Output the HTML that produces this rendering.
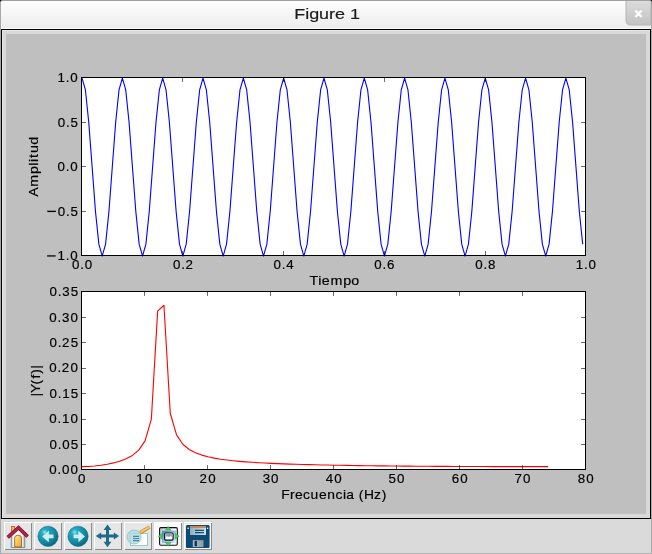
<!DOCTYPE html>
<html><head><meta charset="utf-8"><title>Figure 1</title>
<style>html,body{margin:0;padding:0;width:652px;height:554px;overflow:hidden;background:#dadada;font-family:"Liberation Sans",sans-serif}</style>
</head><body>
<svg width="652" height="554" viewBox="0 0 652 554" style="position:absolute;left:0;top:0;will-change:transform">
<defs>
<linearGradient id="tb" x1="0" y1="0" x2="0" y2="1"><stop offset="0" stop-color="#ffffff"/><stop offset="1" stop-color="#ececec"/></linearGradient>
<linearGradient id="cb" x1="0" y1="0" x2="0" y2="1"><stop offset="0" stop-color="#dcdcdc"/><stop offset="1" stop-color="#c2c2c2"/></linearGradient>
</defs>
<rect x="0" y="0" width="652" height="554" fill="#dadada"/>
<rect x="0" y="0" width="652" height="29" fill="url(#tb)"/>
<rect x="1" y="28" width="650" height="1" fill="#fafafa"/>
<path d="M626,0 H651 V25 H630.5 Q626,25 626,20.5 Z" fill="url(#cb)" stroke="#b5b5b5" stroke-width="1"/>
<path d="M635.3,10.7 L641.7,17.1 M641.7,10.7 L635.3,17.1" stroke="#8a8a8a" stroke-opacity="0.35" stroke-width="2.6" transform="translate(0,0.6)"/>
<path d="M635.3,10.7 L641.7,17.1 M641.7,10.7 L635.3,17.1" stroke="#fff" stroke-width="2.5"/>
<g transform="translate(327.1,19) scale(1.165,1)"><text x="0" y="0" text-anchor="middle" font-size="15.4" fill="#1c1c1c" stroke="#1c1c1c" stroke-width="0.2" font-family="Liberation Sans, sans-serif">Figure 1</text></g>
<rect x="0" y="0" width="1" height="554" fill="#a8a8a8"/>
<rect x="651" y="0" width="1" height="554" fill="#a8a8a8"/>
<rect x="0" y="0" width="652" height="1" fill="#a0a0a0"/>
<rect x="0" y="553" width="652" height="1" fill="#b0b0b0"/>
<rect x="0" y="0" width="1" height="1" fill="#111"/><rect x="1" y="0" width="1" height="1" fill="#777"/><rect x="0" y="1" width="1" height="1" fill="#777"/><rect x="1" y="1" width="1" height="1" fill="#d0d0d0"/>
<rect x="651" y="0" width="1" height="1" fill="#111"/><rect x="650" y="0" width="1" height="1" fill="#777"/><rect x="651" y="1" width="1" height="1" fill="#777"/>
<rect x="1" y="29" width="650" height="490" fill="#000"/>
<rect x="2" y="30" width="648" height="488" fill="#e6e6e6"/>
<rect x="3" y="31" width="647" height="487" fill="#d9d9d9"/>
<rect x="6" y="34" width="640" height="480" fill="#bfbfbf"/>
<rect x="81.5" y="77.5" width="504.0" height="178.0" fill="#fff"/>
<polyline points="82.05,78.05 85.41,89.97 88.77,122.55 92.13,167.05 95.49,211.55 98.85,244.13 102.21,256.05 105.57,244.13 108.93,211.55 112.29,167.05 115.65,122.55 119.01,89.97 122.37,78.05 125.73,89.97 129.09,122.55 132.45,167.05 135.81,211.55 139.17,244.13 142.53,256.05 145.89,244.13 149.25,211.55 152.61,167.05 155.97,122.55 159.33,89.97 162.69,78.05 166.05,89.97 169.41,122.55 172.77,167.05 176.13,211.55 179.49,244.13 182.85,256.05 186.21,244.13 189.57,211.55 192.93,167.05 196.29,122.55 199.65,89.97 203.01,78.05 206.37,89.97 209.73,122.55 213.09,167.05 216.45,211.55 219.81,244.13 223.17,256.05 226.53,244.13 229.89,211.55 233.25,167.05 236.61,122.55 239.97,89.97 243.33,78.05 246.69,89.97 250.05,122.55 253.41,167.05 256.77,211.55 260.13,244.13 263.49,256.05 266.85,244.13 270.21,211.55 273.57,167.05 276.93,122.55 280.29,89.97 283.65,78.05 287.01,89.97 290.37,122.55 293.73,167.05 297.09,211.55 300.45,244.13 303.81,256.05 307.17,244.13 310.53,211.55 313.89,167.05 317.25,122.55 320.61,89.97 323.97,78.05 327.33,89.97 330.69,122.55 334.05,167.05 337.41,211.55 340.77,244.13 344.13,256.05 347.49,244.13 350.85,211.55 354.21,167.05 357.57,122.55 360.93,89.97 364.29,78.05 367.65,89.97 371.01,122.55 374.37,167.05 377.73,211.55 381.09,244.13 384.45,256.05 387.81,244.13 391.17,211.55 394.53,167.05 397.89,122.55 401.25,89.97 404.61,78.05 407.97,89.97 411.33,122.55 414.69,167.05 418.05,211.55 421.41,244.13 424.77,256.05 428.13,244.13 431.49,211.55 434.85,167.05 438.21,122.55 441.57,89.97 444.93,78.05 448.29,89.97 451.65,122.55 455.01,167.05 458.37,211.55 461.73,244.13 465.09,256.05 468.45,244.13 471.81,211.55 475.17,167.05 478.53,122.55 481.89,89.97 485.25,78.05 488.61,89.97 491.97,122.55 495.33,167.05 498.69,211.55 502.05,244.13 505.41,256.05 508.77,244.13 512.13,211.55 515.49,167.05 518.85,122.55 522.21,89.97 525.57,78.05 528.93,89.97 532.29,122.55 535.65,167.05 539.01,211.55 542.37,244.13 545.73,256.05 549.09,244.13 552.45,211.55 555.81,167.05 559.17,122.55 562.53,89.97 565.89,78.05 569.25,89.97 572.61,122.55 575.97,167.05 579.33,211.55 582.69,244.13" fill="none" stroke="#0000ff" stroke-width="1.11" stroke-linejoin="round"/>
<path d="M81.5,255.5v-4.4M81.5,77.5v4.4M182.5,255.5v-4.4M182.5,77.5v4.4M283.5,255.5v-4.4M283.5,77.5v4.4M384.5,255.5v-4.4M384.5,77.5v4.4M485.5,255.5v-4.4M485.5,77.5v4.4M585.5,255.5v-4.4M585.5,77.5v4.4M81.5,255.5h4.4M585.5,255.5h-4.4M81.5,211.5h4.4M585.5,211.5h-4.4M81.5,166.5h4.4M585.5,166.5h-4.4M81.5,122.5h4.4M585.5,122.5h-4.4M81.5,77.5h4.4M585.5,77.5h-4.4" stroke="#000" stroke-width="0.6" fill="none"/>
<rect x="81.5" y="77.5" width="504.0" height="178.0" fill="none" stroke="#000" stroke-width="1"/>
<rect x="81.5" y="291.5" width="504.0" height="178.0" fill="#fff"/>
<polyline points="82.05,466.66 88.35,466.50 94.65,466.02 100.95,465.27 107.25,464.24 113.55,462.91 119.85,461.16 126.15,458.79 132.45,455.42 138.75,450.18 145.05,440.83 151.35,419.16 157.65,311.14 163.95,305.27 170.25,413.27 176.55,434.93 182.85,444.25 189.15,449.45 195.45,452.78 201.75,455.10 208.05,456.81 214.35,458.13 220.65,459.18 226.95,460.03 233.25,460.74 239.55,461.34 245.85,461.86 252.15,462.30 258.45,462.69 264.75,463.03 271.05,463.34 277.35,463.62 283.65,463.86 289.95,464.09 296.25,464.29 302.55,464.47 308.85,464.64 315.15,464.80 321.45,464.94 327.75,465.07 334.05,465.20 340.35,465.31 346.65,465.41 352.95,465.51 359.25,465.60 365.55,465.69 371.85,465.77 378.15,465.84 384.45,465.91 390.75,465.98 397.05,466.04 403.35,466.09 409.65,466.14 415.95,466.19 422.25,466.24 428.55,466.28 434.85,466.32 441.15,466.36 447.45,466.40 453.75,466.43 460.05,466.46 466.35,466.48 472.65,466.51 478.95,466.53 485.25,466.55 491.55,466.57 497.85,466.59 504.15,466.60 510.45,466.62 516.75,466.63 523.05,466.64 529.35,466.65 535.65,466.65 541.95,466.66 548.25,466.66" fill="none" stroke="#ff0000" stroke-width="1.11" stroke-linejoin="round"/>
<path d="M81.5,469.5v-4.4M81.5,291.5v4.4M144.5,469.5v-4.4M144.5,291.5v4.4M207.5,469.5v-4.4M207.5,291.5v4.4M270.5,469.5v-4.4M270.5,291.5v4.4M333.5,469.5v-4.4M333.5,291.5v4.4M396.5,469.5v-4.4M396.5,291.5v4.4M459.5,469.5v-4.4M459.5,291.5v4.4M522.5,469.5v-4.4M522.5,291.5v4.4M585.5,469.5v-4.4M585.5,291.5v4.4M81.5,469.5h4.4M585.5,469.5h-4.4M81.5,444.5h4.4M585.5,444.5h-4.4M81.5,419.5h4.4M585.5,419.5h-4.4M81.5,393.5h4.4M585.5,393.5h-4.4M81.5,368.5h4.4M585.5,368.5h-4.4M81.5,342.5h4.4M585.5,342.5h-4.4M81.5,317.5h4.4M585.5,317.5h-4.4M81.5,291.5h4.4M585.5,291.5h-4.4" stroke="#000" stroke-width="0.6" fill="none"/>
<rect x="81.5" y="291.5" width="504.0" height="178.0" fill="none" stroke="#000" stroke-width="1"/>
<g font-family="Liberation Sans, sans-serif" fill="#000" stroke="#000" stroke-width="0.18">
<rect x="47.22" y="255.37" width="8.35" height="1.11"/><text transform="translate(0,260.10) scale(1.000,1)" x="57.45 65.72 70.23" y="0" font-size="13.333">1.0</text>
<rect x="47.50" y="210.87" width="8.35" height="1.11"/><text transform="translate(0,215.60) scale(1.000,1)" x="57.79 66.00 70.46" y="0" font-size="13.333">0.5</text>
<text transform="translate(0,171.10) scale(1.000,1)" x="57.51 65.72 70.23" y="0" font-size="13.333">0.0</text>
<text transform="translate(0,126.60) scale(1.000,1)" x="57.79 66.00 70.46" y="0" font-size="13.333">0.5</text>
<text transform="translate(0,82.10) scale(1.000,1)" x="57.45 65.72 70.23" y="0" font-size="13.333">1.0</text>
<text transform="translate(0,269.00) scale(1.000,1)" x="71.98 80.19 84.70" y="0" font-size="13.333">0.0</text>
<text transform="translate(0,269.00) scale(1.000,1)" x="173.01 181.22 185.55" y="0" font-size="13.333">0.2</text>
<text transform="translate(0,269.00) scale(1.000,1)" x="273.51 281.73 286.23" y="0" font-size="13.333">0.4</text>
<text transform="translate(0,269.00) scale(1.000,1)" x="374.36 382.57 387.08" y="0" font-size="13.333">0.6</text>
<text transform="translate(0,269.00) scale(1.000,1)" x="475.19 483.41 487.92" y="0" font-size="13.333">0.8</text>
<text transform="translate(0,269.00) scale(1.000,1)" x="575.63 583.90 588.41" y="0" font-size="13.333">1.0</text>
<text transform="translate(0,285.00) scale(1.070,1)" x="289.23 297.36 300.71 308.78 320.69 328.38" y="0" font-size="13.333">Tiempo</text>
<text transform="translate(38.30,0) rotate(-90) scale(1.070,1)" x="-183.84 -174.58 -162.67 -154.83 -151.36 -147.60 -143.06 -135.20" y="0" font-size="13.333">Amplitud</text>
<text transform="translate(0,474.10) scale(1.000,1)" x="49.23 57.44 61.95 70.43" y="0" font-size="13.333">0.00</text>
<text transform="translate(0,448.67) scale(1.000,1)" x="49.51 57.72 62.23 70.66" y="0" font-size="13.333">0.05</text>
<text transform="translate(0,423.24) scale(1.000,1)" x="49.23 57.44 61.89 70.43" y="0" font-size="13.333">0.10</text>
<text transform="translate(0,397.81) scale(1.000,1)" x="49.51 57.72 62.17 70.66" y="0" font-size="13.333">0.15</text>
<text transform="translate(0,372.39) scale(1.000,1)" x="49.23 57.44 61.77 70.43" y="0" font-size="13.333">0.20</text>
<text transform="translate(0,346.96) scale(1.000,1)" x="49.51 57.72 62.05 70.66" y="0" font-size="13.333">0.25</text>
<text transform="translate(0,321.53) scale(1.000,1)" x="49.23 57.44 61.97 70.43" y="0" font-size="13.333">0.30</text>
<text transform="translate(0,296.10) scale(1.000,1)" x="49.51 57.72 62.25 70.66" y="0" font-size="13.333">0.35</text>
<text transform="translate(0,483.00) scale(1.000,1)" x="77.94" y="0" font-size="13.333">0</text>
<text transform="translate(0,483.00) scale(1.000,1)" x="136.35 144.89" y="0" font-size="13.333">10</text>
<text transform="translate(0,483.00) scale(1.000,1)" x="199.48 208.14" y="0" font-size="13.333">20</text>
<text transform="translate(0,483.00) scale(1.000,1)" x="262.65 271.12" y="0" font-size="13.333">30</text>
<text transform="translate(0,483.00) scale(1.000,1)" x="325.81 334.30" y="0" font-size="13.333">40</text>
<text transform="translate(0,483.00) scale(1.000,1)" x="388.57 397.11" y="0" font-size="13.333">50</text>
<text transform="translate(0,483.00) scale(1.000,1)" x="451.68 460.16" y="0" font-size="13.333">60</text>
<text transform="translate(0,483.00) scale(1.000,1)" x="514.57 523.08" y="0" font-size="13.333">70</text>
<text transform="translate(0,483.00) scale(1.000,1)" x="577.69 586.17" y="0" font-size="13.333">80</text>
<text transform="translate(0,498.60) scale(1.040,1)" x="270.35 278.80 283.67 291.33 298.67 306.73 314.74 322.52 329.83 332.83 341.13 344.96 350.02 359.75 367.01" y="0" font-size="13.333">Frecuencia (Hz)</text>
<text transform="translate(40.30,0) rotate(-90) scale(1.040,1)" x="-381.32 -377.95 -369.65 -364.02 -359.46 -354.65" y="0" font-size="13.333">|Y(f)|</text>
</g>
<rect x="4" y="522" width="28" height="28" fill="#e6e6e6"/>
<rect x="4" y="522" width="28" height="1" fill="#ffffff"/>
<rect x="4" y="522" width="1" height="28" fill="#ffffff"/>
<rect x="31" y="523" width="1" height="27" fill="#8a8a8a"/>
<rect x="5" y="549" width="27" height="1" fill="#8a8a8a"/>
<rect x="34" y="522" width="28" height="28" fill="#e6e6e6"/>
<rect x="34" y="522" width="28" height="1" fill="#ffffff"/>
<rect x="34" y="522" width="1" height="28" fill="#ffffff"/>
<rect x="61" y="523" width="1" height="27" fill="#8a8a8a"/>
<rect x="35" y="549" width="27" height="1" fill="#8a8a8a"/>
<rect x="64" y="522" width="28" height="28" fill="#e6e6e6"/>
<rect x="64" y="522" width="28" height="1" fill="#ffffff"/>
<rect x="64" y="522" width="1" height="28" fill="#ffffff"/>
<rect x="91" y="523" width="1" height="27" fill="#8a8a8a"/>
<rect x="65" y="549" width="27" height="1" fill="#8a8a8a"/>
<rect x="94" y="522" width="28" height="28" fill="#e6e6e6"/>
<rect x="94" y="522" width="28" height="1" fill="#ffffff"/>
<rect x="94" y="522" width="1" height="28" fill="#ffffff"/>
<rect x="121" y="523" width="1" height="27" fill="#8a8a8a"/>
<rect x="95" y="549" width="27" height="1" fill="#8a8a8a"/>
<rect x="124" y="522" width="28" height="28" fill="#e6e6e6"/>
<rect x="124" y="522" width="28" height="1" fill="#ffffff"/>
<rect x="124" y="522" width="1" height="28" fill="#ffffff"/>
<rect x="151" y="523" width="1" height="27" fill="#8a8a8a"/>
<rect x="125" y="549" width="27" height="1" fill="#8a8a8a"/>
<rect x="154" y="522" width="28" height="28" fill="#e6e6e6"/>
<rect x="154" y="522" width="28" height="1" fill="#ffffff"/>
<rect x="154" y="522" width="1" height="28" fill="#ffffff"/>
<rect x="181" y="523" width="1" height="27" fill="#8a8a8a"/>
<rect x="155" y="549" width="27" height="1" fill="#8a8a8a"/>
<rect x="184" y="522" width="28" height="28" fill="#e6e6e6"/>
<rect x="184" y="522" width="28" height="1" fill="#ffffff"/>
<rect x="184" y="522" width="1" height="28" fill="#ffffff"/>
<rect x="211" y="523" width="1" height="27" fill="#8a8a8a"/>
<rect x="185" y="549" width="27" height="1" fill="#8a8a8a"/>
<defs>
<radialGradient id="ball" cx="0.33" cy="0.3" r="0.8"><stop offset="0" stop-color="#78f4ff"/><stop offset="0.18" stop-color="#2aa9c0"/><stop offset="0.6" stop-color="#148aa4"/><stop offset="1" stop-color="#0a6179"/></radialGradient>
<linearGradient id="door" x1="0" y1="0" x2="1" y2="1"><stop offset="0" stop-color="#fff0b0"/><stop offset="0.5" stop-color="#f7c54e"/><stop offset="1" stop-color="#e9a52a"/></linearGradient>
<linearGradient id="wall" x1="0" y1="0" x2="1" y2="0"><stop offset="0" stop-color="#b8c8c8"/><stop offset="0.2" stop-color="#ffffff"/><stop offset="0.8" stop-color="#f4f4f4"/><stop offset="1" stop-color="#a8b8b8"/></linearGradient>
<linearGradient id="lbl" x1="0" y1="0" x2="1" y2="0"><stop offset="0" stop-color="#8fb0c2"/><stop offset="1" stop-color="#cfe0e8"/></linearGradient>
<linearGradient id="shut" x1="0" y1="0" x2="1" y2="0"><stop offset="0" stop-color="#b0bec6"/><stop offset="1" stop-color="#8a9ca6"/></linearGradient>
<linearGradient id="scr" x1="0" y1="0" x2="1" y2="1"><stop offset="0" stop-color="#3f86d0"/><stop offset="0.6" stop-color="#9cc8f0"/><stop offset="1" stop-color="#e4f2ff"/></linearGradient>
<linearGradient id="frm" x1="0" y1="0" x2="1" y2="1"><stop offset="0" stop-color="#c4c4c4"/><stop offset="0.5" stop-color="#f4f4f4"/><stop offset="1" stop-color="#ffffff"/></linearGradient>
</defs>
<!-- home -->
<g>
<path d="M11.3,547.6 V533.5 L18.5,527 L24.8,533 V547.6 Z" fill="url(#wall)" stroke="#6f9396" stroke-width="1"/>
<rect x="11.3" y="547" width="13.5" height="0.9" fill="#6f9ea3"/>
<path d="M14.6,547 V538.2 Q14.6,535.4 17.2,535.4 H18.9 Q21.5,535.4 21.5,538.2 V547 Z" fill="url(#door)" stroke="#a4542c" stroke-width="0.85"/>
<rect x="11.5" y="526.4" width="3.2" height="5" fill="#f4c04a" stroke="#9a4c34" stroke-width="0.7"/>
<path d="M7.75,537.35 L18.5,527.6 L27.6,536.5" fill="none" stroke="#7c0c2a" stroke-width="3.6" stroke-linejoin="miter"/>
<path d="M7.75,537.35 L18.5,527.6 L27.6,536.5" fill="none" stroke="#b4234a" stroke-width="2.1" stroke-linejoin="miter"/>
</g>
<!-- back -->
<g>
<circle cx="48.05" cy="536.3" r="10.15" fill="url(#ball)" stroke="#0d6078" stroke-width="0.5"/>
<path d="M42.1,536.4 L48.8,530.8 V534.6 H53.5 V538.2 H48.8 V542.2 Z" fill="#cdeff2"/>
</g>
<!-- forward -->
<g>
<circle cx="78.05" cy="536.3" r="10.15" fill="url(#ball)" stroke="#0d6078" stroke-width="0.5"/>
<path d="M85,536.4 L78.4,530.8 V534.6 H73.6 V538.2 H78.4 V542.2 Z" fill="#cdeff2"/>
</g>
<!-- move -->
<g fill="#1f6a88">
<rect x="106" y="529" width="3" height="13.5"/>
<rect x="100.5" y="534.5" width="14" height="3"/>
<path d="M107.5,524.6 L103.6,530 H111.4 Z"/>
<path d="M107.5,547.2 L103.6,541.8 H111.4 Z"/>
<path d="M95.8,536 L101.2,532.4 V539.6 Z"/>
<path d="M119.2,536 L113.8,532.4 V539.6 Z"/>
</g>
<!-- zoom -->
<g>
<rect x="130.5" y="533.5" width="17" height="12" fill="#ffffff" stroke="#8ccfd8" stroke-width="1"/>
<circle cx="134.1" cy="537" r="7.0" fill="#b0d8de" fill-opacity="0.8" stroke="#8fc6ce" stroke-width="0.9"/>
<path d="M133,536.4 H139.2 M133,538.5 H139.2 M133,540.6 H139.2" stroke="#3f88a0" stroke-width="1.15"/>
<path d="M140.2,532.6 L149.6,527" stroke="#c98030" stroke-width="3.6" stroke-linecap="butt"/>
<path d="M140.4,532.3 L149.4,527" stroke="#f6c463" stroke-width="2.2" stroke-linecap="butt"/>
</g>
<!-- subplots -->
<g>
<rect x="155" y="523" width="26" height="26" fill="#fbfbfb"/>
<rect x="159.6" y="527.6" width="17.7" height="17.6" rx="1.2" fill="url(#frm)" stroke="#111" stroke-width="1.1"/>
<rect x="161.9" y="530.7" width="14.2" height="12.6" fill="url(#scr)"/>
<rect x="164.6" y="533" width="8.5" height="7.2" rx="1.4" fill="#fff" stroke="#111" stroke-width="1.2"/>
<rect x="165.2" y="533.6" width="7.3" height="2.9" fill="#a8a8a8"/>
<rect x="167.7" y="533.6" width="2.2" height="2.9" fill="#7c98d8"/>
<g fill="#46d452" stroke="#1f8f2f" stroke-width="0.45">
<path d="M168.2,526.4 L165.4,530.2 H171 Z"/>
<path d="M168.2,546.2 L165.4,542.4 H171 Z"/>
<path d="M158.3,536.3 L162.1,533.5 V539.1 Z"/>
<path d="M179.2,536.3 L175.4,533.5 V539.1 Z"/>
</g>
</g>
<!-- save -->
<g>
<rect x="185" y="524" width="26" height="25" fill="#f6f6f6"/>
<path d="M186.8,525 H208.7 L209.6,525.9 V547.2 L208.7,548.1 H186.8 L185.9,547.2 V525.9 Z" fill="#0c4a74"/>
<rect x="190" y="526.3" width="16" height="8.7" fill="url(#lbl)"/>
<rect x="190" y="526.3" width="16" height="1.6" fill="#d8813c"/>
<path d="M195,530.4 H204 M195,532.6 H204" stroke="#1b4d72" stroke-width="1.1"/>
<rect x="192.8" y="540.2" width="10.7" height="6.9" fill="url(#shut)"/>
<rect x="194.6" y="541" width="2.3" height="5.3" fill="#1a2850"/>
<circle cx="188.1" cy="528.3" r="0.8" fill="#fff"/>
<circle cx="207.6" cy="528.3" r="0.8" fill="#fff"/>
</g>

</svg>
</body></html>
